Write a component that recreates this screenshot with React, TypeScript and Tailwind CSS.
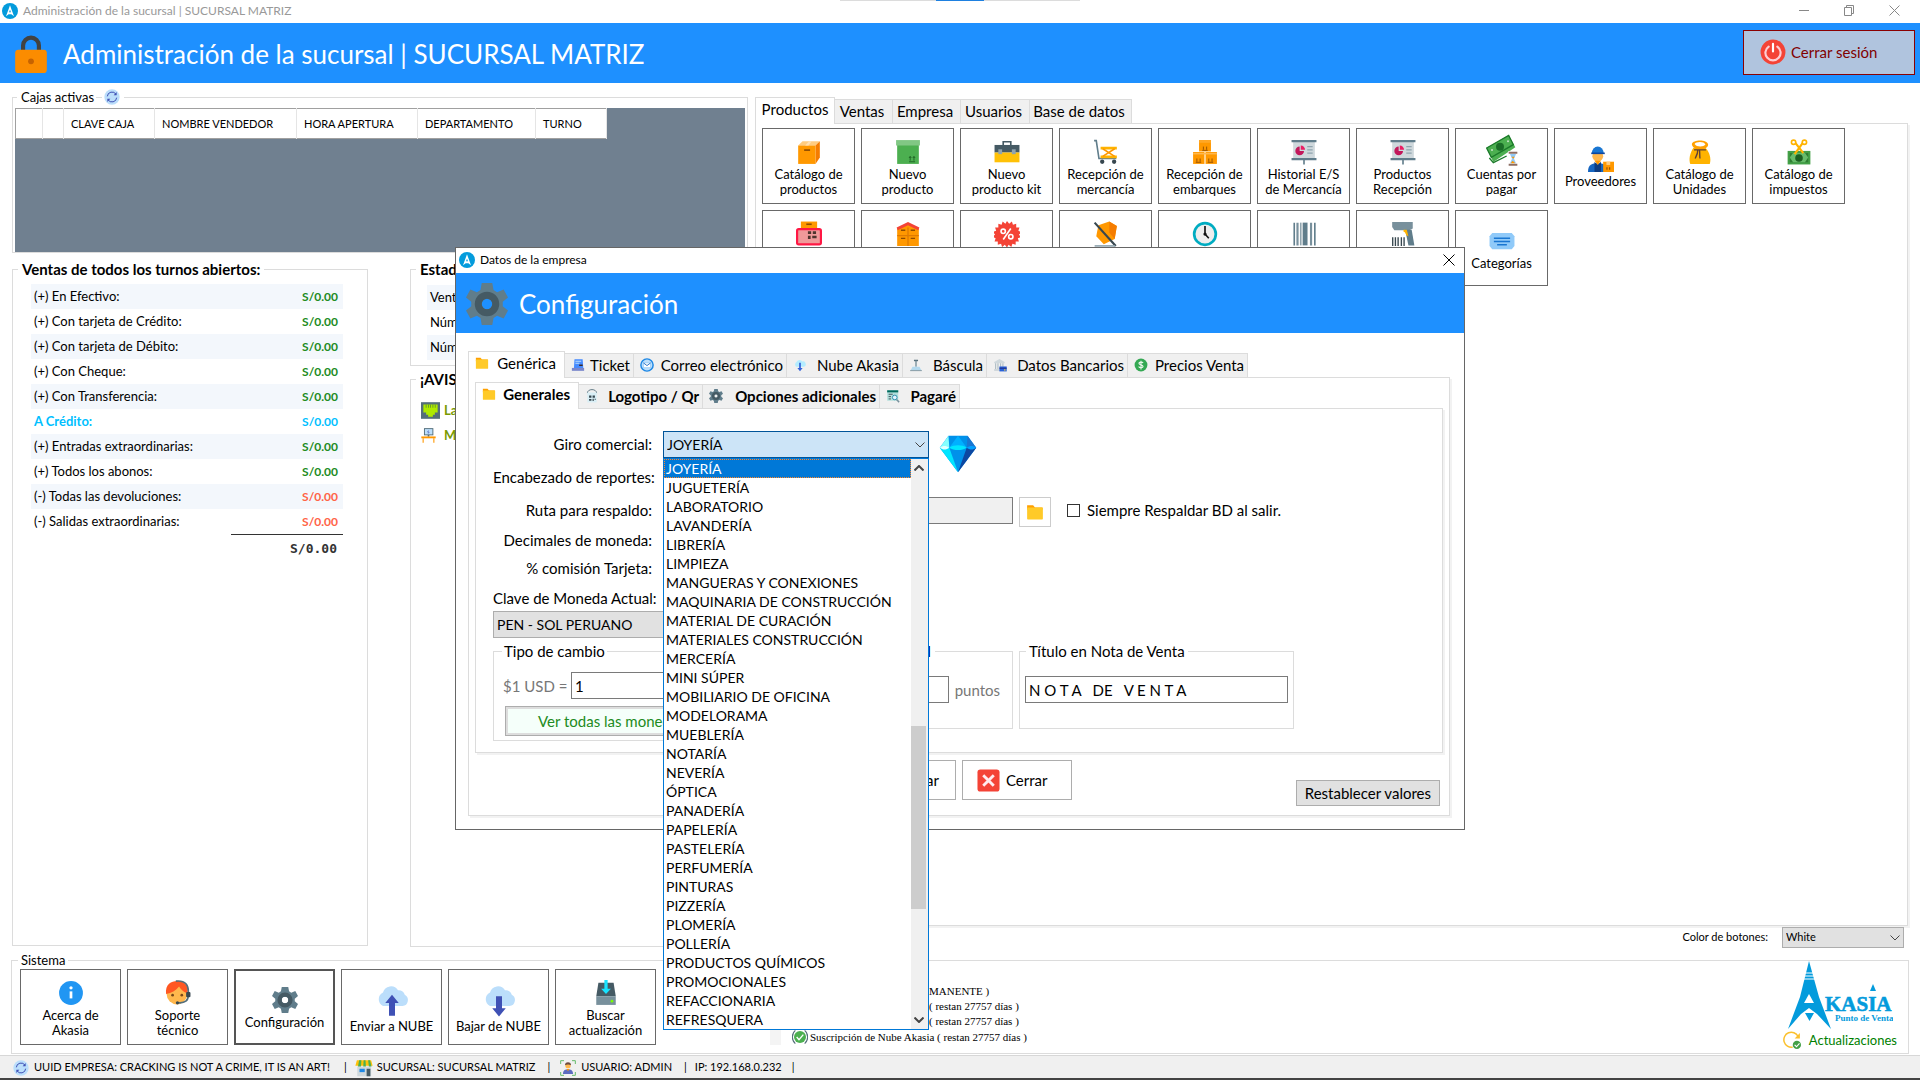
import React from 'react';

const art: Record<string, React.ReactNode> = {
  akasia: (
    <>
      <circle cx="24" cy="24" r="24" fill="#039bdc" />
      <path d="M24 7l4 11 8 22-8-6h-8l-8 6 8-22z" fill="#fff" />
      <path d="M24 20l3 8h-6z" fill="#039bdc" />
    </>
  ),
  lock: (
    <>
      <path d="M12 24V15a12 12 0 0 1 24 0v9h-5V15a7 7 0 0 0-14 0v9z" fill="#424242" />
      <rect x="1" y="20" width="38" height="28" rx="4" fill="#fb8c00" transform="translate(4 0)" />
      <circle cx="24" cy="34" r="3.5" fill="#c76300" />
    </>
  ),
  power: (
    <>
      <circle cx="24" cy="24" r="23" fill="#f44336" />
      <path d="M16 14a14 14 0 1 0 16 0" fill="none" stroke="#ffcdd2" strokeWidth="4" strokeLinecap="round" />
      <path d="M24 9v14" stroke="#fff" strokeWidth="4" strokeLinecap="round" />
    </>
  ),
  refresh: (
    <>
      <circle cx="24" cy="24" r="23" fill="#bbdefb" />
      <path d="M10 22a14 14 0 0 1 26-6M38 26a14 14 0 0 1-26 6" fill="none" stroke="#3f51b5" strokeWidth="3" />
      <path d="M38 9v10h-9zM10 39V29h9z" fill="#3f51b5" />
    </>
  ),
  box: (
    <>
      <path d="M4 12l8-8h32l-8 8z" fill="#ffcc80" />
      <path d="M36 12l8-8v30l-8 12z" fill="#f57c00" />
      <rect x="4" y="12" width="32" height="34" fill="#ff9800" />
      <path d="M17 12l7-8h5l-6 8z" fill="#ffe0b2" />
      <rect x="15" y="19" width="11" height="3" fill="#8d4a00" />
    </>
  ),
  greenBox: (
    <>
      <rect x="4" y="10" width="40" height="36" fill="#4caf50" />
      <rect x="2" y="2" width="44" height="10" fill="#81c784" />
      <path d="M28 40v-7m-2 2l2-3 2 3M35 40v-7m-2 2l2-3 2 3M26 42h11" stroke="#1b5e20" strokeWidth="1.6" fill="none" />
    </>
  ),
  toolbox: (
    <>
      <path d="M17 12V5h14v7" fill="none" stroke="#455a64" strokeWidth="3" />
      <rect x="1" y="11" width="46" height="14" fill="#455a64" />
      <rect x="1" y="25" width="46" height="18" fill="#ffc107" />
      <rect x="8" y="19" width="7" height="9" fill="#90a4ae" />
      <rect x="33" y="19" width="7" height="9" fill="#90a4ae" />
    </>
  ),
  cart: (
    <>
      <path d="M2 3h4l5 33h32" fill="none" stroke="#607d8b" strokeWidth="3" />
      <path d="M14 17h30M14 33h30" stroke="#ffb300" strokeWidth="5" />
      <path d="M18 18l22 14M40 18L18 32" stroke="#ff9800" strokeWidth="3" />
      <circle cx="17" cy="42" r="4" fill="#37474f" />
      <circle cx="39" cy="42" r="4" fill="#37474f" />
    </>
  ),
  boxes: (
    <>
      <rect x="13" y="2" width="22" height="21" fill="#ff9800" />
      <rect x="13" y="2" width="22" height="5" fill="#ffa726" />
      <rect x="2" y="24" width="21" height="22" fill="#ff9800" />
      <rect x="25" y="24" width="21" height="22" fill="#ff9800" />
      <path d="M2 27h44" stroke="#ffb74d" strokeWidth="3" />
      <path d="M21 20v-6M27 20v-6M9 42v-6M15 42v-6M31 42v-6M37 42v-6M19 21h10M7 43h10M29 43h10" stroke="#8d4a00" strokeWidth="1.6" />
    </>
  ),
  board: (
    <>
      <rect x="4" y="4" width="40" height="32" fill="#cfd8dc" />
      <path d="M1 4h46M1 37h46" stroke="#607d8b" strokeWidth="4" />
      <path d="M24 38v9" stroke="#607d8b" strokeWidth="3" />
      <path d="M16 14a8 8 0 1 0 8 8h-8z" fill="#c2185b" />
      <path d="M18 12a8 8 0 0 1 8 8h-8z" fill="#e91e63" />
      <path d="M30 14h10M30 20h10M30 26h10" stroke="#90a4ae" strokeWidth="2.5" />
    </>
  ),
  money: (
    <>
      <path d="M1 21L34 2l10 18L11 42z" fill="#4caf50" />
      <path d="M1 21L34 2l7 14L8 35z" fill="#4caf50" stroke="#1b7a2a" strokeWidth="2" />
      <circle cx="21" cy="19" r="6" fill="#1b6e28" />
      <circle cx="9" cy="24" r="1.500" fill="#c8e6c9" />
      <circle cx="33" cy="11" r="1.500" fill="#c8e6c9" />
      <path d="M5 36l6 7 20-10" fill="none" stroke="#1b7a2a" strokeWidth="2" />
      <rect x="33" y="26" width="14" height="22" fill="#fff" />
      <path d="M34 28h13M34 46h13" stroke="#8d6e63" strokeWidth="3" />
      <path d="M36 30h9l-3 7 3 7h-9l3-7z" fill="#90caf9" />
      <path d="M38 34h5l-2 3zM37 44l3-4 4 4z" fill="#ff9800" />
    </>
  ),
  supplier: (
    <>
      <circle cx="18" cy="19" r="10" fill="#ffb74d" />
      <path d="M7 14a11 13 0 0 1 22 0z" fill="#1976d2" />
      <path d="M6 12h25v3H6z" fill="#0d47a1" />
      <path d="M0 48c0-14 8-16 18-16s18 2 18 16z" fill="#1565c0" />
      <path d="M12 29l6 6 6-6v19H12z" fill="#0d3c80" />
      <path d="M12 27h12l-6 8z" fill="#ff9800" />
      <rect x="28" y="29" width="20" height="19" fill="#ff9800" />
      <path d="M34 29h7v6h-7z" fill="#ffcc80" />
      <path d="M35 44v-5M40 44v-5" stroke="#8d4a00" strokeWidth="2" />
    </>
  ),
  sack: (
    <>
      <path d="M12 16C5 26 3 38 6 46h36c3-9 0-22-8-30z" fill="#ffb300" />
      <path d="M9 9c2-8 28-9 30 1 0 5-6 9-15 9S9 14 9 9z" fill="#ffa000" />
      <path d="M14 9c3-5 18-5 20 1-3 5-17 5-20-1z" fill="#fff" />
      <path d="M13 20h22M20 20c0 8-3 12-5 16M23 20c1 6 0 10 1 16" stroke="#5d4037" strokeWidth="2.5" fill="none" />
    </>
  ),
  tax: (
    <>
      <rect x="3" y="22" width="42" height="25" fill="#43a047" />
      <rect x="7" y="26" width="34" height="17" fill="#2e7d32" />
      <path d="M7 34l6-8h22l6 8-6 9H13z" fill="#66bb6a" />
      <circle cx="24" cy="35" r="7" fill="#1b5e20" />
      <path d="M14 3l18 23M34 3L16 28" stroke="#ffb300" strokeWidth="4" />
      <circle cx="14" cy="6" r="4" fill="#fff" stroke="#ffb300" strokeWidth="3" />
      <circle cx="34" cy="6" r="4" fill="#fff" stroke="#ffb300" strokeWidth="3" />
    </>
  ),
  codeBox: (
    <>
      <rect x="9" y="1" width="30" height="16" fill="#ff9800" />
      <path d="M19 6h10" stroke="#8d4a00" strokeWidth="3" />
      <rect x="2" y="15" width="44" height="28" rx="3" fill="#ef9a9a" stroke="#ff1744" strokeWidth="4" />
      <path d="M22 19h6v5h-6zM31 19h6v5h-6zM22 27h5v6h-5zM30 27h8v5h-8z" fill="#4e342e" />
    </>
  ),
  warehouse: (
    <>
      <path d="M4 14L24 3l20 11v32H4z" fill="#ff9800" />
      <path d="M3 12L24 2l21 10-2 5L24 8 5 17z" fill="#f44336" />
      <path d="M4 27h40M24 12v34" stroke="#e07b00" strokeWidth="2.5" />
      <path d="M11 17h8M29 17h8M11 32h8M29 32h8" stroke="#8d4a00" strokeWidth="2.5" />
    </>
  ),
  discount: (
    <>
      <path
        d="M24 0l4 5 5-4 2 6 6-2 0 7 6 0-2 6 6 3-5 4 4 5-6 2 2 6-6 0 0 6-6-2-2 6-5-4-3 5-4-5-5 4-2-6-6 2 0-6-6 0 2-6-6-3 5-4-4-5 6-2-2-6 6 0 0-7 6 2 2-6 5 4z"
        fill="#f44336"
      />
      <path d="M31 14L17 34" stroke="#fff" strokeWidth="3" />
      <circle cx="17" cy="19" r="4" fill="none" stroke="#fff" strokeWidth="3" />
      <circle cx="31" cy="29" r="4" fill="none" stroke="#fff" strokeWidth="3" />
    </>
  ),
  noBox: (
    <>
      <path d="M10 8L30 1l14 8-4 24-20 10L6 28z" fill="#ff9800" />
      <path d="M30 1l14 8-4 24-10-12z" fill="#f57c00" />
      <path d="M3 3l39 43" stroke="#37474f" strokeWidth="4" />
      <path d="M3 46h38" stroke="#90a4ae" strokeWidth="3" />
    </>
  ),
  clock: (
    <>
      <circle cx="24" cy="24" r="20" fill="#eee" stroke="#00acc1" strokeWidth="5" />
      <path d="M24 9v15l7 8" fill="none" stroke="#111" strokeWidth="3" />
      <circle cx="24" cy="24" r="3" fill="#111" />
    </>
  ),
  barcode: (
    <>
      <path d="M6 3v42M44 3v42" stroke="#607d8b" strokeWidth="3" />
      <path d="M12 3v42M37 3v42" stroke="#78909c" strokeWidth="4" />
      <path d="M18 3v42" stroke="#90a4ae" strokeWidth="3" />
      <path d="M26 3v42" stroke="#607d8b" strokeWidth="9" />
    </>
  ),
  scanner: (
    <>
      <path d="M4 2h38v12l-6 3H8l-4-6z" fill="#78909c" />
      <path d="M28 16h12l5 29H34z" fill="#607d8b" />
      <path d="M25 16h6l3 12c-6-1-4-7-9-8z" fill="#ffb300" />
      <path d="M5 30v16M10 30v16M15 30v16M21 30v16M26 30v16" stroke="#37474f" strokeWidth="2.5" />
    </>
  ),
  ticketTag: (
    <>
      <path d="M6 9h36l5 6v18l-5 6H6l-5-6V15z" fill="#90caf9" />
      <path d="M9 19h30M9 25h30M15 31h18" stroke="#1976d2" strokeWidth="2.5" />
    </>
  ),
  info: (
    <>
      <circle cx="24" cy="24" r="22" fill="#2196f3" />
      <path d="M24 21v13" stroke="#fff" strokeWidth="5" />
      <circle cx="24" cy="14.500" r="3" fill="#fff" />
    </>
  ),
  support: (
    <>
      <circle cx="22" cy="26" r="19" fill="#ffb74d" />
      <path d="M2 26C0 8 12 2 22 2s22 4 20 22c-6 0-12-6-16-12C20 20 12 24 2 26z" fill="#ff5722" />
      <path d="M20 2c18-2 24 8 23 22M43 28c0 10-6 15-18 14" fill="none" stroke="#546e7a" strokeWidth="3" />
      <rect x="39" y="22" width="8" height="10" rx="2" fill="#37474f" />
      <circle cx="14" cy="28" r="2.500" fill="#784719" />
      <circle cx="31" cy="28" r="2.500" fill="#784719" />
      <circle cx="23" cy="42" r="3" fill="#37474f" />
    </>
  ),
  gear: (
    <>
      <path
        d="M18 0h12l1.500 8 4 2.500L43 7.500l5 9-6 5v5l6 5-5 9-7.500-3-4 2.500L30 48H18l-1.500-8-4-2.500-7.500 3-5-9 6-5v-5l-6-5 5-9 7.500 3 4-2.500zM24 18a6 6 0 1 0 0 12 6 6 0 0 0 0-12z"
        fillRule="evenodd"
        fill="#607d8b"
      />
      <path d="M24 10a14 14 0 1 0 0 28 14 14 0 0 0 0-28zm0 8a6 6 0 1 1 0 12 6 6 0 0 1 0-12z" fillRule="evenodd" fill="#455a64" />
    </>
  ),
  cloudUp: (
    <>
      <path d="M12 32a10 10 0 0 1 0-18 11 11 0 0 1 20-3 8 8 0 0 1 9 6 8 8 0 0 1-3 15z" fill="#bbdefb" />
      <path d="M20 45V28h-5l9-11 9 11h-5v17z" fill="#3f51b5" />
    </>
  ),
  cloudDown: (
    <>
      <path d="M12 32a10 10 0 0 1 0-18 11 11 0 0 1 20-3 8 8 0 0 1 9 6 8 8 0 0 1-3 15z" fill="#bbdefb" />
      <path d="M20 19v16h-5l9 11 9-11h-5V19z" fill="#3f51b5" />
    </>
  ),
  disk: (
    <>
      <path d="M10 5h28l4 25H6z" fill="#455a64" />
      <path d="M6 30h36v16H6z" fill="#78909c" />
      <circle cx="35" cy="39" r="2.500" fill="#76ff03" />
      <path d="M21 0h6v16h6l-9 10-9-10h6z" fill="#18e3ff" />
    </>
  ),
  folder: (
    <>
      <path d="M3 6h16l5 6h20v6H3z" fill="#ffa000" />
      <rect x="3" y="12" width="42" height="32" rx="2" fill="#ffca28" />
    </>
  ),
  ticket: (
    <>
      <path d="M12 4h28l2 30H10z" fill="#448aff" />
      <path d="M15 11h20M15 18h14" stroke="#bbdefb" strokeWidth="4" />
      <path d="M28 25h12" stroke="#3e2723" strokeWidth="5" />
      <path d="M3 34h42v10H3z" fill="#7986cb" />
    </>
  ),
  mail: (
    <>
      <circle cx="24" cy="24" r="21" fill="#bbdefb" stroke="#1e88e5" strokeWidth="5" />
      <path d="M12 17h24v16H12z" fill="#fff" stroke="#64b5f6" strokeWidth="1.500" />
      <path d="M12 17l12 9 12-9" fill="none" stroke="#1565c0" strokeWidth="3" />
    </>
  ),
  cloudSmall: (
    <>
      <path d="M12 30a9 9 0 0 1 0-16 11 11 0 0 1 20-2 8 8 0 0 1 5 18z" fill="#b3ecff" />
      <path d="M21 16v18h-6l9 11 9-11h-6V16z" fill="#3564d8" />
    </>
  ),
  scale: (
    <>
      <path d="M17 6h14v5H17z" fill="#546e7a" />
      <path d="M24 8v22" stroke="#607d8b" strokeWidth="4" />
      <path d="M12 30h24l6 12H6z" fill="#b3d9ee" />
      <path d="M4 41h40v4H4z" fill="#90a4ae" />
    </>
  ),
  bank: (
    <>
      <path d="M4 14L22 3l18 11v4H4z" fill="#cfd8dc" />
      <path d="M9 18v20M17 18v20M26 18v12M34 18v12M4 41h20" stroke="#b0bec5" strokeWidth="4" />
      <rect x="22" y="29" width="25" height="17" fill="#2962d9" />
      <path d="M22 35h25" stroke="#1a237e" strokeWidth="3" />
      <rect x="38" y="39" width="5" height="4" fill="#fdd835" />
    </>
  ),
  dollar: (
    <>
      <circle cx="24" cy="24" r="22" fill="#34a853" />
      <path d="M31 17c-2-4-14-4-14 1 0 7 14 4 14 11 0 5-12 6-15 0M24 9v30" fill="none" stroke="#e8f5e9" strokeWidth="4" />
    </>
  ),
  qr: (
    <>
      <path d="M8 14a16 12 0 0 1 32 0" fill="none" stroke="#546e7a" strokeWidth="3" />
      <path d="M8 12h32v34H8z" fill="#d8eef5" />
      <path d="M14 22h8v8h-8zM26 22h8v8h-8zM14 34h8v6h-8zM26 33h4v8h-4zM33 33h4v4h-4z" fill="#37474f" />
    </>
  ),
  note: (
    <>
      <rect x="4" y="4" width="38" height="36" fill="#b2dfdb" />
      <path d="M4 8h38" stroke="#00695c" strokeWidth="7" />
      <path d="M9 18h14M9 26h8M9 34h8" stroke="#37474f" strokeWidth="3" />
      <circle cx="30" cy="29" r="8" fill="#e3f2fd" stroke="#1e88a8" strokeWidth="3" />
      <path d="M36 36l9 9" stroke="#78909c" strokeWidth="5" />
    </>
  ),
  diamond: (
    <>
      <path d="M12 1h24l11 15-23 31L1 16z" fill="#0091ea" />
      <path d="M12 1L1 16h12z" fill="#84ffff" />
      <path d="M1 16h12l11 31z" fill="#00e5ff" />
      <path d="M24 1l11 15H13z" fill="#00b0ff" />
      <path d="M36 1l11 15H35z" fill="#1976d2" />
      <path d="M35 16h12L24 47z" fill="#0d47a1" />
      <path d="M13 16c6-4 16-4 22 0-6 4-16 4-22 0z" fill="#00e5ff" />
      <path d="M1 16c4-3 8-3 12 0-4 3-8 3-12 0z" fill="#e0ffff" />
      <path d="M35 16c4-3 8-3 12 0-4 3-8 3-12 0z" fill="#00a0ff" />
    </>
  ),
  closeBox: (
    <>
      <rect x="1" y="1" width="46" height="46" rx="6" fill="#f44336" />
      <path d="M13 13l22 22M35 13L13 35" stroke="#ffebee" strokeWidth="6" />
    </>
  ),
  store: (
    <>
      <rect x="6" y="20" width="37" height="26" fill="#cfd8dc" />
      <rect x="12" y="26" width="14" height="9" fill="#1e88e5" />
      <rect x="31" y="26" width="10" height="20" fill="#455a64" />
      <path d="M5 3h38l4 15H1z" fill="#ffc107" />
      <path d="M11 3h6l-1 17H8zM23 3h5l1 17h-7zM35 3h5l4 17h-7z" fill="#4caf50" />
    </>
  ),
  user: (
    <>
      <path d="M2 12V2h10M36 2h10v10M46 36v10H36M12 46H2V36" fill="none" stroke="#66bb6a" strokeWidth="3" />
      <circle cx="24" cy="17" r="8" fill="#ffb74d" />
      <path d="M15 16a9 9 0 0 1 18 0c-6-3-12-3-18 0z" fill="#6d4c41" />
      <path d="M9 42c0-12 8-14 15-14s15 2 15 14z" fill="#5c6bc0" />
      <path d="M20 27h8l-4 7z" fill="#ff9800" />
    </>
  ),
  lan: (
    <>
      <rect x="0" y="3" width="48" height="42" fill="#546e7a" />
      <path d="M6 9h36v20h-7v6h-5v5H18v-5h-5v-6H6z" fill="#aeea00" />
      <path d="M13 9v8M19 9v8M24 9v8M30 9v8M36 9v8" stroke="#558b2f" strokeWidth="2" />
    </>
  ),
  desk: (
    <>
      <rect x="11" y="2" width="27" height="20" fill="#bbdefb" stroke="#546e7a" strokeWidth="3" />
      <path d="M24 8l-3 5h5l-3 5" stroke="#3f51b5" strokeWidth="2" fill="none" />
      <path d="M24 22v6" stroke="#546e7a" strokeWidth="5" />
      <path d="M1 30h46" stroke="#ff9800" strokeWidth="6" />
      <path d="M7 32v15M41 32v15" stroke="#ffb74d" strokeWidth="5" />
    </>
  ),
  check: (
    <>
      <circle cx="24" cy="24" r="18" fill="#4caf50" />
      <path d="M14 24l7 8 13-15" fill="none" stroke="#fff" strokeWidth="4" />
      <path d="M10 4c-12 10-12 30 0 40M38 4c12 10 12 30 0 40" fill="none" stroke="#546e7a" strokeWidth="3.500" />
    </>
  ),
  update: (
    <>
      <path d="M40 14A20 20 0 1 0 26 43" fill="none" stroke="#fbc02d" strokeWidth="4" />
      <path d="M45 5v15H31z" fill="#fbc02d" />
      <circle cx="37" cy="37" r="11" fill="#43a047" />
      <path d="M31 37l5 5 8-9" fill="none" stroke="#fff" strokeWidth="3" />
    </>
  ),
};

function Icon({ name, className = 'size-4' }: { name: string; className?: string }) {
  return (
    <svg viewBox="0 0 48 48" className={`shrink-0 ${className}`} aria-hidden="true">
      {art[name]}
    </svg>
  );
}

type Action = { icon: string; lines: string[]; size?: string; active?: boolean };

const products: Action[] = [
  { icon: 'box', lines: ['Catálogo de', 'productos'] },
  { icon: 'greenBox', lines: ['Nuevo', 'producto'] },
  { icon: 'toolbox', lines: ['Nuevo', 'producto kit'] },
  { icon: 'cart', lines: ['Recepción de', 'mercancía'] },
  { icon: 'boxes', lines: ['Recepción de', 'embarques'] },
  { icon: 'board', lines: ['Historial E/S', 'de Mercancía'] },
  { icon: 'board', lines: ['Productos', 'Recepción'] },
  { icon: 'money', lines: ['Cuentas por', 'pagar'], size: 'size-8 -mt-1' },
  { icon: 'supplier', lines: ['Proveedores'] },
  { icon: 'sack', lines: ['Catálogo de', 'Unidades'] },
  { icon: 'tax', lines: ['Catálogo de', 'impuestos'] },
  { icon: 'codeBox', lines: [] },
  { icon: 'warehouse', lines: [] },
  { icon: 'discount', lines: [] },
  { icon: 'noBox', lines: [] },
  { icon: 'clock', lines: [] },
  { icon: 'barcode', lines: [] },
  { icon: 'scanner', lines: [] },
  { icon: 'ticketTag', lines: ['Categorías'] },
];

const system: Action[] = [
  { icon: 'info', lines: ['Acerca de', 'Akasia'] },
  { icon: 'support', lines: ['Soporte', 'técnico'] },
  { icon: 'gear', lines: ['Configuración'], active: true },
  { icon: 'cloudUp', lines: ['Enviar a NUBE'], size: 'size-9' },
  { icon: 'cloudDown', lines: ['Bajar de NUBE'], size: 'size-9' },
  { icon: 'disk', lines: ['Buscar', 'actualización'] },
];

const sales: [string, string][] = [
  ['(+) En Efectivo:', 'in'],
  ['(+) Con tarjeta de Crédito:', 'in'],
  ['(+) Con tarjeta de Débito:', 'in'],
  ['(+) Con Cheque:', 'in'],
  ['(+) Con Transferencia:', 'in'],
  ['A Crédito:', 'credit'],
  ['(+) Entradas extraordinarias:', 'in'],
  ['(+) Todos los abonos:', 'in'],
  ['(-) Todas las devoluciones:', 'out'],
  ['(-) Salidas extraordinarias:', 'out'],
];

const tones: Record<string, string> = {
  in: 'text-[#228b22]',
  credit: 'text-[#00bfff]',
  out: 'text-[#ff6347]',
};

const trades = [
  'JOYERÍA', 'JUGUETERÍA', 'LABORATORIO', 'LAVANDERÍA', 'LIBRERÍA', 'LIMPIEZA', 'MANGUERAS Y CONEXIONES',
  'MAQUINARIA DE CONSTRUCCIÓN', 'MATERIAL DE CURACIÓN', 'MATERIALES CONSTRUCCIÓN', 'MERCERÍA', 'MINI SÚPER',
  'MOBILIARIO DE OFICINA', 'MODELORAMA', 'MUEBLERÍA', 'NOTARÍA', 'NEVERÍA', 'ÓPTICA', 'PANADERÍA', 'PAPELERÍA',
  'PASTELERÍA', 'PERFUMERÍA', 'PINTURAS', 'PIZZERÍA', 'PLOMERÍA', 'POLLERÍA', 'PRODUCTOS QUÍMICOS',
  'PROMOCIONALES', 'REFACCIONARIA', 'REFRESQUERA',
];

function ActionButton({ action, width }: { action: Action; width: string }) {
  return (
    <button
      type="button"
      className={`flex h-[76px] flex-col items-center justify-center bg-white pt-0.5 text-[13px] leading-[15px] whitespace-nowrap ${width} ${action.active ? 'border-2 border-[#555]' : 'border border-[#696969]'}`}
    >
      <Icon name={action.icon} className={`mb-px ${action.size ?? 'size-7 p-px'}`} />
      {action.lines.length === 0 && <span className="h-[30px]" />}
      {action.lines.map((line) => (
        <span key={line}>{line}</span>
      ))}
    </button>
  );
}

function Chevron({ className = '' }: { className?: string }) {
  return (
    <svg viewBox="0 0 10 6" className={`pointer-events-none h-1.5 w-2.5 ${className}`} fill="none" stroke="#444" aria-hidden="true">
      <path d="M.5.5L5 5 9.500.5" />
    </svg>
  );
}

type GroupProps = { title: React.ReactNode; children?: React.ReactNode; className?: string; legend?: string; body?: string };

function Group({ title, children, className = '', legend = '', body = '' }: GroupProps) {
  return (
    <fieldset className={`min-w-0 border border-[#dcdcdc] ${className}`}>
      <legend className={`whitespace-nowrap ${legend}`}>{title}</legend>
      <div className={body}>{children}</div>
    </fieldset>
  );
}

function Tabs({ items, bold = false }: { items: { label: string; icon?: string; width: string }[]; bold?: boolean }) {
  return (
    <div role="tablist" className={`flex items-end text-[15px] leading-5 ${bold ? 'font-bold' : ''}`}>
      {items.map((tab, i) => (
        <button
          key={tab.label}
          type="button"
          role="tab"
          aria-selected={i === 0}
          className={`flex items-center whitespace-nowrap border-[#dcdcdc] ${tab.icon ? 'justify-between pl-1.5' : 'justify-center'} ${tab.width} ${i === 0 ? 'relative -mb-px h-[27px] border border-b-0 bg-white px-2 pb-1' : 'h-6 border-t border-r bg-[#f0f0f0] pr-[3px] pb-px'}`}
        >
          {tab.icon && <Icon name={tab.icon} className="size-3.5" />}
          {tab.label}
        </button>
      ))}
    </div>
  );
}

function Table() {
  const cols: [string, string][] = [
    ['w-[27px]', ''], ['w-[21px]', ''], ['w-[91px]', 'CLAVE CAJA'], ['w-[142px]', 'NOMBRE VENDEDOR'],
    ['w-[121px]', 'HORA APERTURA'], ['w-[118px]', 'DEPARTAMENTO'], ['w-[71px]', 'TURNO'],
  ];
  return (
    <table className="table-fixed border-collapse border border-[#a0a0a0] bg-white text-[11px]">
      <thead>
        <tr className="h-[30px]">
          {cols.map(([w, t], i) => (
            <th key={i} className={`border-r border-[#e5e5e5] p-0 pt-px pl-[7px] text-left font-normal whitespace-nowrap ${w}`}>
              {t}
            </th>
          ))}
        </tr>
      </thead>
    </table>
  );
}

function TradeSelect() {
  return (
    <div className="relative w-[266px]">
      <select id="giro" className="block h-[27px] w-full appearance-none border border-[#005499] bg-[#cce4f7] pl-[3px] text-sm leading-6">
        <option>JOYERÍA</option>
      </select>
      <Chevron className="absolute top-[11px] right-1" />
      <div className="absolute top-full left-0 z-20 flex w-full border border-[#0078d7] bg-white">
        <ul role="listbox" aria-label="Giro comercial" className="min-w-0 flex-1 text-sm leading-[19px]">
          {trades.map((t, i) => (
            <li
              key={t}
              role="option"
              aria-selected={i === 0}
              className={`h-[19px] pl-0.5 whitespace-nowrap ${i === 0 ? 'bg-[#0078d7] text-white outline-1 -outline-offset-1 outline-dotted outline-[#ff8728]' : ''}`}
            >
              {t}
            </li>
          ))}
        </ul>
        <div className="flex w-[17px] flex-col items-center bg-[#f0f0f0] pr-0.5">
          <Chevron className="mt-1.5 rotate-180 stroke-2" />
          <div className="h-[255px]" />
          <div className="h-[183px] w-full bg-[#cdcdcd]" />
          <Chevron className="mt-auto mb-1.5 stroke-2" />
        </div>
      </div>
    </div>
  );
}

const label = 'w-[159px] shrink-0 text-right whitespace-nowrap';
const field = 'h-[27px] border border-[#7a7a7a] px-[3px]';

function ConfigDialog() {
  return (
    <section role="dialog" aria-label="Datos de la empresa" className="absolute top-[247px] left-[455px] z-10 w-[1010px] border border-[#666] bg-white text-[15px]">
      <div className="flex h-[25px] items-center gap-[5px] pb-px pl-[3px] text-xs">
        <Icon name="akasia" />
        <span>Datos de la empresa</span>
        <button type="button" aria-label="Cerrar ventana" className="mr-[9px] ml-auto">
          <svg viewBox="0 0 12 12" className="size-3" stroke="#000" aria-hidden="true">
            <path d="M.5.5l11 11M11.500.5l-11 11" />
          </svg>
        </button>
      </div>
      <header className="flex h-[60px] items-center bg-[#1e90ff] pt-0.5 pl-2.5 text-white">
        <Icon name="gear" className="size-[42px]" />
        <h2 className="ml-[11px] text-[26px]">Configuración</h2>
      </header>
      <div className="pt-[18px] pr-[11px] pb-[13px] pl-3">
        <Tabs
          items={[
            { label: 'Genérica', icon: 'folder', width: 'w-[97px]' },
            { label: 'Ticket', icon: 'ticket', width: 'w-[69px]' },
            { label: 'Correo electrónico', icon: 'mail', width: 'w-[153px]' },
            { label: 'Nube Akasia', icon: 'cloudSmall', width: 'w-[116px]' },
            { label: 'Báscula', icon: 'scale', width: 'w-[84px]' },
            { label: 'Datos Bancarios', icon: 'bank', width: 'w-[141px]' },
            { label: 'Precios Venta', icon: 'dollar', width: 'w-[120px]' },
          ]}
        />
        <div className="mr-[3px] border border-[#dcdcdc] px-1.5 pt-1 pb-[9px] shadow-[2px_2px_0_#f2f2f2]">
          <Tabs
            bold
            items={[
              { label: 'Generales', icon: 'folder', width: 'w-[104px]' },
              { label: 'Logotipo / Qr', icon: 'qr', width: 'w-[124px]' },
              { label: 'Opciones adicionales', icon: 'gear', width: 'w-[177px]' },
              { label: 'Pagaré', icon: 'note', width: 'w-[80px]' },
            ]}
          />
          <form className="border border-[#dcdcdc] pt-[22px] pb-[11px] pl-[17px] leading-[26px] shadow-[2px_2px_0_#f2f2f2]">
            <div className="flex h-[33px] items-start">
              <label htmlFor="giro" className={`mr-[11px] ${label}`}>Giro comercial:</label>
              <TradeSelect />
              <Icon name="diamond" className="mt-1 ml-2.5 size-[38px]" />
            </div>
            <div className={label}>Encabezado de reportes:</div>
            <div className="mt-[7px] flex items-start">
              <label htmlFor="ruta" className={`mr-[11px] ${label}`}>Ruta para respaldo:</label>
              <input id="ruta" readOnly className={`w-[350px] bg-[#f0f0f0] ${field}`} />
              <button type="button" aria-label="Elegir carpeta" className="ml-1.5 flex h-[30px] w-8 items-center justify-center border border-[#ccc] bg-white">
                <Icon name="folder" className="size-[18px]" />
              </button>
              <label className="ml-4 flex items-center gap-[7px] whitespace-nowrap">
                <input type="checkbox" className="size-[13px] appearance-none border border-[#333] bg-white" />
                Siempre Respaldar BD al salir.
              </label>
            </div>
            <div className={label}>Decimales de moneda:</div>
            <div className={`mt-0.5 ${label}`}>% comisión Tarjeta:</div>
            <label htmlFor="moneda" className="mt-1 block">Clave de Moneda Actual:</label>
            <select id="moneda" className="block h-[27px] w-[220px] appearance-none border border-[#adadad] bg-[#e1e1e1] pl-[3px] text-sm">
              <option>PEN - SOL PERUANO</option>
            </select>
            <div className="mt-1 flex items-start gap-1.5">
              <Group title="Tipo de cambio" legend="ml-2 px-0.5 leading-[18px]" className="w-[220px]" body="px-[11px] pt-3 pb-1">
                <div className="flex items-center gap-1.5">
                  <label htmlFor="usd" className="w-[62px] -ml-0.5 whitespace-nowrap text-[#777]">$1 USD =</label>
                  <input id="usd" defaultValue="1" className={`min-w-0 flex-1 ${field}`} />
                </div>
                <button type="button" className="mt-[7px] h-[30px] w-full overflow-hidden border border-[#adadad] bg-[#f5fffa] pl-8 text-left leading-[26px] whitespace-nowrap text-[#228b22] ring-2 ring-[#ddd] ring-inset">
                  Ver todas las monedas
                </button>
              </Group>
              <Group title="l" legend="ml-[203px] px-1 leading-[18px] font-bold text-[#000080]" className="w-[294px]" body="pt-4 pr-3 pb-[25px]">
                <div className="flex items-center justify-end gap-1.5">
                  <input id="puntos" className={`w-[60px] ${field}`} />
                  <label htmlFor="puntos" className="text-[#777]">puntos</label>
                </div>
              </Group>
              <Group title={<label htmlFor="nota">Título en Nota de Venta</label>} legend="ml-1.5 px-[3px] leading-[18px]" className="w-[275px]" body="px-[5px] pt-4 pb-[25px]">
                <input id="nota" defaultValue="N O T A   DE   V E N T A" className={`block w-full ${field}`} />
              </Group>
            </div>
          </form>
          <div className="mt-[7px] flex items-start pl-[371px]">
            <button type="button" className="h-10 w-[110px] border border-[#adadad] bg-white pr-4 text-right">Guardar</button>
            <button type="button" className="ml-1.5 flex h-10 w-[110px] items-center gap-1.5 border border-[#adadad] bg-white pl-3.5">
              <Icon name="closeBox" className="size-[23px]" />
              Cerrar
            </button>
            <button type="button" className="mt-5 mr-[3px] ml-auto h-[26px] border border-[#adadad] bg-[#e1e1e1] px-2">Restablecer valores</button>
          </div>
        </div>
      </div>
    </section>
  );
}

function Brand() {
  return (
    <svg viewBox="0 0 106 68" className="h-[68px] w-[106px]" role="img" aria-label="Akasia Punto de Venta">
      <path d="M22 0l10 36 12 32-14-15-8-6-8 6L1 68l12-32z" fill="#039bdc" />
      <path d="M17 12h10M16 15h12M16 18h12" stroke="#fff" />
      <path d="M22 33l5 9h-10z" fill="#fff" />
      <path d="M18 52h9l-4.500 8z" fill="#039bdc" />
      <path d="M86 23l3 7h-6z" fill="#039bdc" />
      <g fill="#039bdc" fontFamily="Liberation Serif, serif" fontWeight="700">
        <text x="38" y="50" fontSize="21" stroke="#039bdc" strokeWidth=".6">KASIA</text>
        <text x="48" y="60" fontSize="9">Punto de Venta</text>
      </g>
    </svg>
  );
}

const heading = 'ml-[5px] px-1 text-[15px] leading-5 font-bold text-black';

export default function App() {
  return (
    <div className="relative flex min-h-screen flex-col overflow-hidden bg-white font-[Lato,sans-serif] text-black">
      <div className="absolute top-0 left-[840px] flex h-px w-60 justify-center bg-[#dcdcdc]">
        <div className="w-12 bg-[#1e80e0]" />
      </div>
      <div className="flex h-[23px] items-center gap-[5px] pb-px pl-0.5 text-xs text-[#999]">
        <Icon name="akasia" />
        <span>Administración de la sucursal | SUCURSAL MATRIZ</span>
        <svg viewBox="0 0 101 11" className="mr-5 mb-px ml-auto h-[11px] w-[101px]" fill="none" stroke="#888" aria-hidden="true">
          <path d="M0 5.500h10M45.500 2.500h7v8h-7zM47.500 2.500v-2h7v8h-2M90.500.5l10 10M100.500.5l-10 10" />
        </svg>
      </div>
      <header className="flex h-[60px] items-center bg-[#1e90ff] pr-[5px] pl-[11px] text-white">
        <Icon name="lock" className="size-10" />
        <h1 className="mt-0.5 ml-3 text-[26px]">Administración de la sucursal | SUCURSAL MATRIZ</h1>
        <button type="button" className="mb-0.5 ml-auto flex h-[45px] w-[172px] items-center gap-[5px] border border-[#8b0000] bg-[#b0c4de] pl-4 text-[15px] text-[#800000]">
          <Icon name="power" className="size-[26px]" />
          Cerrar sesión
        </button>
      </header>

      <main className="flex flex-1 gap-[7px] px-3">
        <div className="flex w-[736px] shrink-0 flex-col pt-1">
          <Group
            legend="ml-1 flex items-center px-1 text-[13px] leading-5"
            body="px-0.5 pt-px"
            title={
              <>
                Cajas activas
                <span className="mx-0.5 h-px w-1.5 bg-[#dcdcdc]" />
                <button type="button" aria-label="Actualizar cajas" className="flex"><Icon name="refresh" /></button>
              </>
            }
          >
            <div className="h-[144px] bg-[#708090]">
              <Table />
            </div>
          </Group>
          <div className="mt-[6px] flex flex-1 gap-[42px] pb-0.5">
            <Group title="Ventas de todos los turnos abiertos:" legend={heading} className="mb-px w-[356px]" body="pt-[5px] pr-6 pl-[18px]">
              {sales.map(([name, tone], i) => (
                <div key={name} className={`flex h-[25px] items-center justify-between pr-[5px] pl-[3px] text-[13px] ${i % 2 === 0 ? 'bg-[#f3f7fc]' : ''}`}>
                  <span className={tone === 'credit' ? 'font-bold text-[#00bfff]' : ''}>{name}</span>
                  <span className={`text-xs font-bold ${tones[tone]}`}>S/0.00</span>
                </div>
              ))}
              <div className="ml-[200px] border-t border-[#333] pt-1.5 pr-1.5 text-right font-['DejaVu_Sans_Mono',monospace] text-[13px] leading-4 font-bold text-[#333]">S/0.00</div>
            </Group>
            <div className="flex flex-1 flex-col">
              <Group title="Estadísticas:" legend={heading} body="px-4 pt-1.5 pb-[5px]">
                {['Ventas:', 'Número:', 'Número:'].map((t, i) => (
                  <div key={i} className={`flex h-[25px] items-center pl-[3px] text-[13px] ${i === 1 ? '' : 'bg-[#f3f7fc]'}`}>{t}</div>
                ))}
              </Group>
              <Group title="¡AVISOS!" legend={heading} className="mt-[3px] flex-1" body="px-2.5 pt-[9px] text-[13px] font-bold text-[#7a9a01]">
                <div className="flex h-[25px] items-center gap-1"><Icon name="lan" className="size-[19px]" />La</div>
                <div className="flex h-[25px] items-center gap-2"><Icon name="desk" className="size-[15px]" />Ma</div>
              </Group>
            </div>
          </div>
        </div>

        <div className="flex min-w-0 flex-1 flex-col pt-[14px] pb-px">
          <Tabs
            items={[
              { label: 'Productos', width: 'w-[80px]' },
              { label: 'Ventas', width: 'w-[58px]' },
              { label: 'Empresa', width: 'w-[68px]' },
              { label: 'Usuarios', width: 'w-[69px]' },
              { label: 'Base de datos', width: 'w-[102px]' },
            ]}
          />
          <div className="flex flex-1 flex-wrap content-start gap-1.5 border border-[#dcdcdc] px-1.5 pt-1 shadow-[2px_2px_0_#f2f2f2]">
            {products.map((p, i) => (
              <ActionButton key={i} action={p} width="w-[93px]" />
            ))}
          </div>
          <div className="mt-px flex items-center justify-end gap-[14px] pr-1 text-[11px]">
            <label htmlFor="color">Color de botones:</label>
            <div className="relative w-[122px]">
              <select id="color" className="block h-[21px] w-full appearance-none border border-[#adadad] bg-[#e1e1e1] pl-[3px]">
                <option>White</option>
              </select>
              <Chevron className="absolute top-2 right-1" />
            </div>
          </div>
        </div>
      </main>

      <div className="mt-1 px-[11px]">
        <Group title="Sistema" legend="ml-1.5 px-[3px] text-[13px] leading-[14px]" body="pt-0.5 pr-[11px] pb-2 pl-2">
          <div className="flex items-end gap-1.5">
            {system.map((a) => (
              <ActionButton key={a.icon} action={a} width="w-[101px]" />
            ))}
            <div className="ml-[108px] w-[11px] self-stretch bg-[#f4f4f4]" />
            <div className="ml-[5px] pl-[18px] font-['Liberation_Serif',serif] text-[11px] leading-[15px] whitespace-nowrap">
              <div className="pl-[119px]">MANENTE )</div>
              <div className="pl-[119px]">( restan 27757 días )</div>
              <div className="pl-[119px]">( restan 27757 días )</div>
              <div className="-ml-[18px] flex items-center gap-0.5">
                <Icon name="check" />
                Suscripción de Nube Akasia ( restan 27757 días )
              </div>
            </div>
            <div className="-mt-2 -mb-1 ml-auto flex flex-col items-start">
              <Brand />
              <a href="#actualizaciones" className="mt-0.5 -ml-1 flex items-center gap-2 text-[13px] leading-[18px] text-[#008000]">
                <Icon name="update" className="size-[18px]" />
                Actualizaciones
              </a>
            </div>
          </div>
        </Group>
      </div>

      <footer className="mt-px border-b-2 border-[#444] bg-[#f0f0f0]">
        <div className="flex h-[23px] items-center border-t border-[#d7d7d7] pt-px pl-[13px] text-[11px] whitespace-nowrap">
          <Icon name="refresh" />
          <span className="ml-[5px]">UUID EMPRESA: CRACKING IS NOT A CRIME, IT IS AN ART!</span>
          <span className="mr-2 ml-3.5">|</span>
          <Icon name="store" className="size-[18px]" />
          <span className="ml-1">SUCURSAL: SUCURSAL MATRIZ</span>
          <span className="mr-2.5 ml-3">|</span>
          <Icon name="user" />
          <span className="ml-[5px]">USUARIO: ADMIN</span>
          <span className="mr-2 ml-3">|</span>
          <span>IP: 192.168.0.232</span>
          <span className="ml-2.5">|</span>
        </div>
      </footer>

      <ConfigDialog />
    </div>
  );
}
